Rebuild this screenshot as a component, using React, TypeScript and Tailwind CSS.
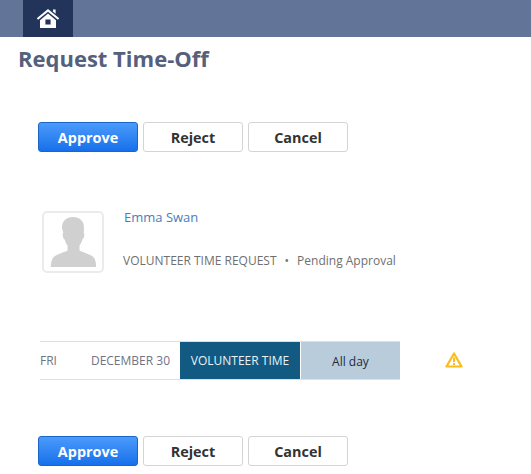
function ActionButtons() {
  return (
    <div className="flex gap-[5px] pl-[38px]">
      <button className="h-[30px] w-[100px] rounded-[3px] border border-[#1a66c4] bg-gradient-to-b from-[#4a9bfb] to-[#1670ea] pt-px text-[14.4px] font-bold text-white">
        Approve
      </button>
      <button className="h-[30px] w-[100px] rounded-[3px] border border-[#d4d4d4] bg-white pt-px text-[14.4px] font-bold text-[#333]">
        Reject
      </button>
      <button className="h-[30px] w-[100px] rounded-[3px] border border-[#d4d4d4] bg-white pt-px text-[14.4px] font-bold text-[#333]">
        Cancel
      </button>
    </div>
  );
}

export default function App() {
  return (
    <div className="h-[474px] w-[531px] overflow-hidden bg-white font-['Open_Sans',sans-serif]">
      <div className="h-[37px] bg-[#627497] pl-[23px]">
        <div className="flex h-[37px] w-[50px] items-center justify-center bg-[#22345a]">
          <svg width="24" height="21" viewBox="0 0 24 21" fill="#fff">
            <path d="M17 1.5h2.6v4.2L17 3.6z" />
            <path d="M12 1 .8 10.2l1.3 1.6L12 3.7l9.9 8.1 1.3-1.6z" />
            <path d="M12 5.600 4 12.200V20h16v-7.800zM14.600 16.600H9.400v-5.200h5.200z" fillRule="evenodd" />
          </svg>
        </div>
      </div>

      <h1 className="mt-[6px] pl-[18px] text-[22px] leading-[30px] font-bold text-[#55607c]">Request Time-Off</h1>

      <div className="mt-[49px]">
        <ActionButtons />
      </div>

      <div className="mt-[59px] flex pl-[42px]">
        <div className="flex h-[62px] w-[62px] items-end justify-center rounded-[5px] border-2 border-[#ebebeb] bg-white pb-[4px]">
          <svg width="46" height="50" viewBox="0 0 46 50" fill="#d0d0d0">
            <path d="M23 0c7 0 11 4 11 11 0 1 0 3-.3 5 .8.3.8 2 .3 4-.3 1.200-.8 2-1.500 2.200-.7 2.600-1.800 4.800-3 6.300v5c2 1.500 13 4 15 8 1 2 1.500 5 1.800 8.500H.700C1 46.500 1.500 43.500 2.500 41.500c2-4 13-6.500 15-8v-5c-1.200-1.500-2.300-3.700-3-6.300-.7-.2-1.200-1-1.500-2.200-.5-2-.5-3.700.3-4C13 14 12 12 12 11 12 4 16 0 23 0z" />
          </svg>
        </div>
        <div className="ml-[19px]">
          <div className="mt-[-3px] pl-[1px] text-[13px] leading-[18px] text-[#4a7dbb]">Emma Swan</div>
          <div className="mt-[26px] flex text-[12px] leading-[18px] text-[#6f6f6f]">
            <span>VOLUNTEER TIME REQUEST</span>
            <span className="mx-[8px]">•</span>
            <span>Pending Approval</span>
          </div>
        </div>
      </div>

      <div className="mt-[68px] flex items-center pl-[40px]">
        <div className="flex h-[39px] w-[360px] border-y border-[#e0e0da] text-[12px]">
          <div className="flex w-[140px] items-center justify-between pr-[10px] text-[#6f7480]">
            <span>FRI</span>
            <span>DECEMBER 30</span>
          </div>
          <div className="flex w-[120px] items-center justify-center bg-[#125a82] pt-px text-[#e8f2f8]">VOLUNTEER TIME</div>
          <div className="ml-px flex flex-1 items-center justify-center bg-[#b9ccdb] pt-[2px] text-[#1c2a40]">All day</div>
        </div>
        <svg className="mb-[2px] ml-[45px]" width="18" height="16" viewBox="0 0 18 16" fill="none">
          <path d="M9 1.500 1.500 14.500h15z" stroke="#fbbc1a" strokeWidth="2.200" strokeLinejoin="round" />
          <path d="M9 5.500v4.500M9 11v2" stroke="#fbbc1a" strokeWidth="2" />
        </svg>
      </div>

      <div className="mt-[56px]">
        <ActionButtons />
      </div>
    </div>
  );
}
